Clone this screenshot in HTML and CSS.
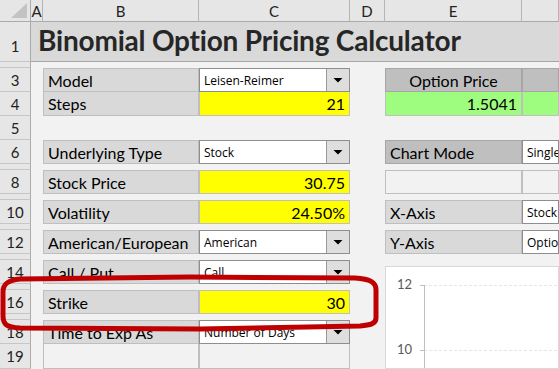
FILE: index.html
```html
<!DOCTYPE html>
<html>
<head>
<meta charset="utf-8">
<title>Binomial Option Pricing Calculator</title>
<link rel="stylesheet" href="styles.css">
</head>
<body>
<div class="sheet">
  <div class="corner"><span class="tri"></span></div>
  <div class="ch">A</div>
  <div class="ch">B</div>
  <div class="ch">C</div>
  <div class="ch">D</div>
  <div class="ch">E</div>
  <div class="ch"></div>

  <div class="rh rh-title">1</div>
  <div class="title">Binomial Option Pricing Calculator</div>

  <div class="rh"></div>

  <div class="rh">3</div>
  <div class="lbl cB">Model</div>
  <div class="dd cC"><span class="dd-text">Leisen-Reimer</span><span class="btn"></span></div>
  <div class="oh cE">Option Price</div>
  <div class="oh cF"></div>

  <div class="rh">4</div>
  <div class="lbl cB nt">Steps</div>
  <div class="yel cC nt">21</div>
  <div class="grn cE nt">1.5041</div>
  <div class="grn cF nt"></div>

  <div class="rh">5</div>

  <div class="rh">6</div>
  <div class="lbl cB">Underlying Type</div>
  <div class="dd cC"><span class="dd-text">Stock</span><span class="btn"></span></div>
  <div class="oh left cE">Chart Mode</div>
  <div class="dd cF"><span class="dd-text">Single</span></div>

  <div class="rh"></div>

  <div class="rh">8</div>
  <div class="lbl cB">Stock Price</div>
  <div class="yel cC">30.75</div>
  <div class="empty cE"></div>
  <div class="empty cF"></div>

  <div class="rh"></div>

  <div class="rh">10</div>
  <div class="lbl cB">Volatility</div>
  <div class="yel cC">24.50%</div>
  <div class="lbl cE">X-Axis</div>
  <div class="dd cF"><span class="dd-text">Stock</span></div>

  <div class="rh"></div>

  <div class="rh">12</div>
  <div class="lbl cB">American/European</div>
  <div class="dd cC"><span class="dd-text">American</span><span class="btn"></span></div>
  <div class="lbl cE">Y-Axis</div>
  <div class="dd cF"><span class="dd-text">Option</span></div>

  <div class="rh"></div>

  <div class="chart">
    <svg class="plot" viewBox="0 0 174 103" width="174" height="103">
      <line x1="38" y1="18.5" x2="174" y2="18.5" stroke="#e6e6e6" stroke-dasharray="3 2"/>
      <line x1="38" y1="83.5" x2="174" y2="83.5" stroke="#e6e6e6" stroke-dasharray="3 2"/>
      <line x1="38.5" y1="18" x2="38.5" y2="103" stroke="#bfbfbf"/>
      <line x1="34" y1="18.5" x2="38" y2="18.5" stroke="#bfbfbf"/>
      <line x1="34" y1="83.5" x2="38" y2="83.5" stroke="#bfbfbf"/>
      <text x="26" y="22" text-anchor="end" class="axis">12</text>
      <text x="26" y="87" text-anchor="end" class="axis">10</text>
    </svg>
  </div>

  <div class="rh">14</div>
  <div class="lbl cB">Call / Put</div>
  <div class="dd cC"><span class="dd-text">Call</span><span class="btn"></span></div>

  <div class="rh"></div>

  <div class="rh">16</div>
  <div class="lbl cB">Strike</div>
  <div class="yel cC">30</div>

  <div class="rh"></div>

  <div class="rh">18</div>
  <div class="lbl cB">Time to Exp As</div>
  <div class="dd cC"><span class="dd-text">Number of Days</span><span class="btn"></span></div>

  <div class="rh">19</div>
  <div class="empty cB nt"></div>
  <div class="empty cC nt"></div>

  <svg class="mark" viewBox="0 0 559 369" width="559" height="369">
    <path d="M 20 279 L 190 277 L 355 278 C 370 279, 376 282, 376 290 L 376 318 C 376 324, 370 325, 360 326 L 200 329 L 20 328 C 6 327, 3 324, 3 316 L 3 292 C 3 284, 8 280, 20 279 Z" fill="none" stroke="#c00000" stroke-width="5" stroke-linejoin="round"/>
  </svg>
</div>
</body>
</html>
```
FILE: styles.css
```css
* { box-sizing: border-box; margin: 0; padding: 0; }
body { margin: 0; background: #f2f2f2; font-family: Lato, "Liberation Sans", sans-serif; }

.sheet {
  position: relative;
  width: 559px;
  height: 369px;
  overflow: hidden;
  display: grid;
  grid-template-columns: 31px 12px 156px 151px 35px 137px 1fr;
  grid-template-rows: 22px 40px 6px 24px 24px 24px 24px 6px 24px 6px 24px 6px 24px 6px 24px 6px 24px 6px 24px 25px;
  background: #f2f2f2;
  color: #000;
  font-size: 16px;
}

.corner {
  background: #e6e6e6;
  border-right: 1px solid #ababab;
  border-bottom: 1px solid #ababab;
  display: flex;
  justify-content: flex-end;
  align-items: flex-end;
  padding: 0 3px 3px 0;
}
.tri {
  width: 16px;
  height: 15px;
  background: #c3c3c3;
  clip-path: polygon(100% 0, 100% 100%, 0 100%);
}
.ch {
  background: #e6e6e6;
  border-right: 1px solid #b5b5b5;
  border-bottom: 1px solid #ababab;
  display: flex;
  align-items: center;
  justify-content: center;
  color: #222;
  font-size: 15px;
  padding-top: 1px;
}
.rh {
  grid-column: 1;
  background: #e6e6e6;
  border-right: 1px solid #ababab;
  border-bottom: 1px solid #c6c6c6;
  display: flex;
  align-items: center;
  justify-content: center;
  color: #222;
  font-size: 15px;
}
.rh-title { align-items: flex-end; padding-bottom: 6px; }

.title {
  grid-column: 2 / -1;
  background: #d9d9d9;
  border-bottom: 1px solid #a6a6a6;
  font-weight: 700;
  font-size: 28px;
  letter-spacing: -0.2px;
  color: #262626;
  display: flex;
  align-items: flex-end;
  padding: 0 0 4px 7px;
  white-space: nowrap;
}

.cB { grid-column: 3; }
.cC { grid-column: 4; }
.cE { grid-column: 6; }
.cF { grid-column: 7; }

.lbl, .yel, .oh, .grn, .dd, .empty {
  border: 1px solid #bfbfbf;
  display: flex;
  align-items: center;
  white-space: nowrap;
  overflow: hidden;
}
.nt { border-top: none; }

.lbl { background: #d9d9d9; padding-left: 4px; }
.yel { background: #ffff00; justify-content: flex-end; padding-right: 4px; }
.oh { background: #bfbfbf; border-color: #a6a6a6; justify-content: center; }
.oh.left { justify-content: flex-start; padding-left: 4px; }
.grn { background: #9efc7e; border-color: #bfbfbf; justify-content: flex-end; padding-right: 4px; }
.empty { background: #f2f2f2; }

.dd {
  background: #fff;
  border-color: #8e8e8e;
  font-family: "Open Sans", "Noto Sans", sans-serif;
  font-size: 12px;
  padding-left: 4px;
}
.dd-text { flex: 1; }
.btn {
  align-self: stretch;
  width: 23px;
  background: #dedede;
  border-left: 1px solid #9a9a9a;
  display: flex;
  align-items: center;
  justify-content: center;
}
.btn::after {
  content: "";
  width: 10px;
  height: 5px;
  background: #000;
  clip-path: polygon(0 0, 100% 0, 50% 100%);
}

.chart {
  grid-column: 6 / 8;
  grid-row: 15 / 21;
  margin-top: 6px;
  background: #fff;
  border: 1px solid #d9d9d9;
  overflow: hidden;
}
.plot { display: block; }
.axis { font-family: Lato, sans-serif; font-size: 13px; fill: #595959; }

.mark {
  position: absolute;
  left: 0;
  top: 0;
  pointer-events: none;
}
```
